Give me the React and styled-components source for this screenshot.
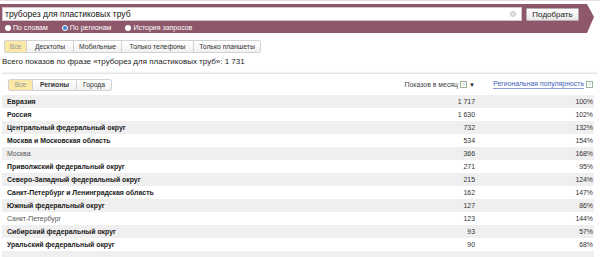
import React from "react";
import styled, { createGlobalStyle } from "styled-components";

const GlobalStyle = createGlobalStyle`
  html, body {
    margin: 0;
    padding: 0;
    overflow: hidden;
    background: #fff;
    font-family: "Liberation Sans", Arial, sans-serif;
    color: #222;
  }
`;

const Page = styled.div`
  width: 600px;
  height: 257px;
  overflow: hidden;
  padding-top: 3px;
  box-sizing: border-box;
  border-top: 1px solid #eadde2;
`;

const SearchBar = styled.div`
  width: 594px;
  height: 29px;
  background: #8e576b;
  box-sizing: border-box;
  padding: 3px 0 0 2px;
  clip-path: polygon(0 0, 587px 0, 100% 45%, 587px 100%, 0 100%);
`;

const InputRow = styled.div`
  display: flex;
  align-items: center;
  gap: 4px;
`;

const Input = styled.div`
  position: relative;
  width: 520px;
  height: 14px;
  background: #fff;
  border: 1px solid #d7c3cb;
  box-sizing: border-box;
  font-size: 8.5px;
  line-height: 12px;
  padding-left: 2px;
  color: #111;
`;

const Clear = styled.span`
  position: absolute;
  right: 5px;
  top: 3px;
  width: 6px;
  height: 6px;
  border-radius: 50%;
  background: #d4d4d4;
  color: #fff;
  font-size: 5px;
  line-height: 6px;
  text-align: center;
`;

const Button = styled.button`
  width: 53px;
  height: 13px;
  padding: 0;
  border: 1px solid #b9a9b0;
  border-radius: 1px;
  background: linear-gradient(#fff, #e8e8e8);
  font-family: inherit;
  font-size: 8px;
  color: #222;
  line-height: 11px;
`;

const RadioRow = styled.div`
  display: flex;
  gap: 14px;
  padding: 2px 0 0 3px;
`;

const Radio = styled.label`
  display: flex;
  align-items: center;
  gap: 2px;
  font-size: 7px;
  color: #fff;
  line-height: 9px;
`;

const Dot = styled.span`
  width: 6px;
  height: 6px;
  border-radius: 50%;
  box-sizing: border-box;
  background: ${p => (p.$on ? "#3c85d6" : "#fff")};
  border: ${p => (p.$on ? "1px solid #fff" : "none")};
`;

const Tabs = styled.div`
  display: flex;
  margin: 7px 0 0 4px;
`;

const Tab = styled.div`
  width: ${p => p.$w}px;
  height: 13px;
  box-sizing: border-box;
  border: 1px solid #d2d2d2;
  margin-left: -1px;
  background: ${p => (p.$active ? "#fbe7a6" : "linear-gradient(#fff, #f1f1f1)")};
  color: ${p => (p.$active ? "#9a9a9a" : "#333")};
  font-weight: ${p => (p.$bold ? "bold" : "normal")};
  font-size: 6.8px;
  line-height: 11px;
  text-align: center;
  white-space: nowrap;
  &:first-child {
    border-radius: 2px 0 0 2px;
    margin-left: 0;
  }
  &:last-child {
    border-radius: 0 2px 2px 0;
  }
`;

const Total = styled.div`
  margin: 3px 0 0 2px;
  font-size: 8px;
  line-height: 11px;
  color: #222;
`;

const Panel = styled.div`
  margin: 6px 3px 0 2px;
  border-top: 1px solid #e4e4e4;
  box-shadow: 0 -1px 1px #f2f2f2;
`;

const Row = styled.div`
  display: grid;
  grid-template-columns: 1fr 100px 118px;
  align-items: center;
  width: 592px;
  height: 13px;
  background: ${p => (p.$odd ? "#efefef" : "#fff")};
  font-size: 6.9px;
  color: #333;
`;

const HeadRow = styled(Row)`
  height: 21px;
  background: #fff;
`;

const Name = styled.div`
  padding-left: 5px;
  font-weight: ${p => (p.$bold ? "bold" : "normal")};
  color: ${p => (p.$bold ? "#1a1a1a" : "#555")};
  white-space: nowrap;
`;

const Num = styled.div`
  text-align: right;
  padding-right: 1px;
  white-space: nowrap;
`;

const HeadCell = styled(Num)`
  display: flex;
  justify-content: flex-end;
  align-items: center;
  gap: 1px;
  color: ${p => (p.$link ? "#3d5fb8" : "#444")};
`;

const LinkText = styled.span`
  border-bottom: 1px solid #8ea0d6;
  line-height: 8px;
`;

const Help = styled.span`
  width: 5px;
  height: 5px;
  border: 1px solid #9bb39b;
  font-size: 4px;
  line-height: 5px;
  text-align: center;
  color: #7a9a7a;
  margin-left: 1px;
`;

const Arrow = styled.span`
  font-size: 6px;
  color: #222;
  margin-left: 1px;
`;

const SubTabs = styled(Tabs)`
  margin: 0 0 0 6px;
  & > div {
    height: 12px;
    line-height: 10px;
  }
`;

const rows = [
  ["Евразия", "1 717", "100%", true],
  ["Россия", "1 630", "102%", true],
  ["Центральный федеральный округ", "732", "132%", true],
  ["Москва и Московская область", "534", "154%", true],
  ["Москва", "366", "168%", false],
  ["Приволжский федеральный округ", "271", "95%", true],
  ["Северо-Западный федеральный округ", "215", "124%", true],
  ["Санкт-Петербург и Ленинградская область", "162", "147%", true],
  ["Южный федеральный округ", "127", "86%", true],
  ["Санкт-Петербург", "123", "144%", false],
  ["Сибирский федеральный округ", "93", "57%", true],
  ["Уральский федеральный округ", "90", "68%", true],
];

export default function App() {
  return (
    <Page>
      <GlobalStyle />
      <SearchBar>
        <InputRow>
          <Input>
            труборез для пластиковых труб
            <Clear>×</Clear>
          </Input>
          <Button>Подобрать</Button>
        </InputRow>
        <RadioRow>
          <Radio><Dot />По словам</Radio>
          <Radio><Dot $on />По регионам</Radio>
          <Radio><Dot />История запросов</Radio>
        </RadioRow>
      </SearchBar>

      <Tabs>
        <Tab $active $w={23}>Все</Tab>
        <Tab $w={48}>Десктопы</Tab>
        <Tab $w={49}>Мобильные</Tab>
        <Tab $w={73}>Только телефоны</Tab>
        <Tab $w={68}>Только планшеты</Tab>
      </Tabs>

      <Total>Всего показов по фразе «труборез для пластиковых труб»: 1 731</Total>

      <Panel>
        <HeadRow>
          <SubTabs>
            <Tab $active $w={25}>Все</Tab>
            <Tab $bold $w={45}>Регионы</Tab>
            <Tab $w={36}>Города</Tab>
          </SubTabs>
          <HeadCell>
            Показов в месяц<Help>?</Help><Arrow>▼</Arrow>
          </HeadCell>
          <HeadCell $link>
            <LinkText>Региональная популярность</LinkText><Help>?</Help>
          </HeadCell>
        </HeadRow>
        {rows.map(([name, count, pop, bold], i) => (
          <Row key={name} $odd={i % 2 === 0}>
            <Name $bold={bold}>{name}</Name>
            <Num>{count}</Num>
            <Num>{pop}</Num>
          </Row>
        ))}
        <Row $odd />
      </Panel>
    </Page>
  );
}
